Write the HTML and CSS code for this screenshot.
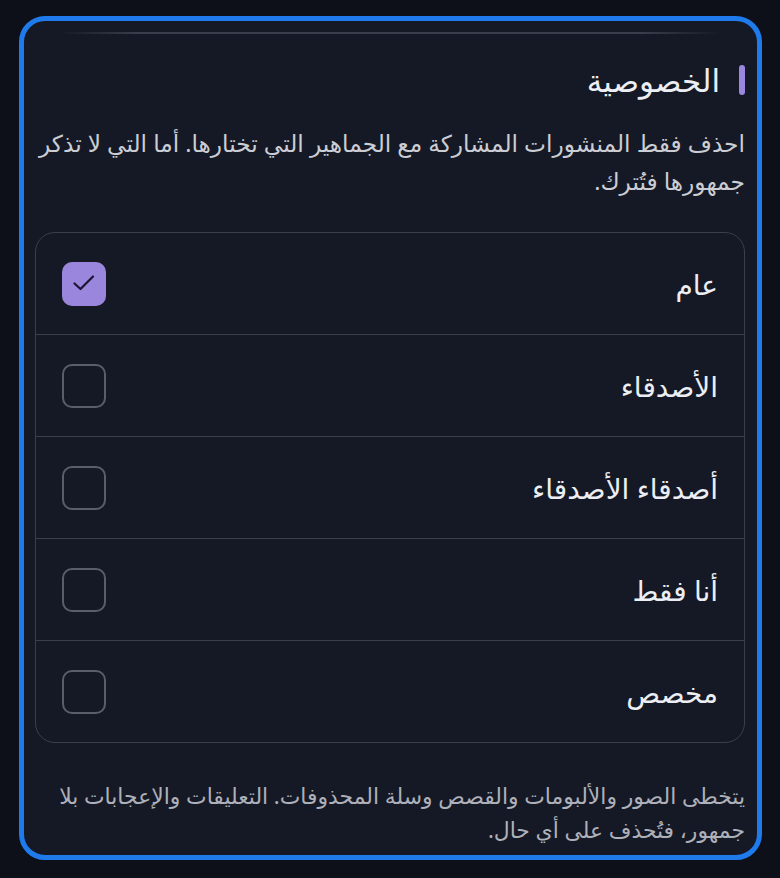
FILE: index.html
```html
<!DOCTYPE html>
<html lang="ar" dir="rtl">
<head>
<meta charset="utf-8">
<title>الخصوصية</title>
<link rel="stylesheet" href="styles.css">
</head>
<body>
<section class="card">
  <div class="top-line"></div>
  <h2 class="title"><span class="bar"></span><span>الخصوصية</span></h2>
  <p class="desc">احذف فقط المنشورات المشاركة مع الجماهير التي تختارها. أما التي لا تذكر جمهورها فتُترك.</p>
  <ul class="options">
    <li class="option"><span class="label">عام</span><span class="box checked"><svg viewBox="0 0 44 44" width="44" height="44"><path d="M12.5 21.5l6 5.5L31 14.5" fill="none" stroke="#1b1433" stroke-width="2.2" stroke-linecap="round" stroke-linejoin="round"/></svg></span></li>
    <li class="option"><span class="label">الأصدقاء</span><span class="box"></span></li>
    <li class="option"><span class="label">أصدقاء الأصدقاء</span><span class="box"></span></li>
    <li class="option"><span class="label">أنا فقط</span><span class="box"></span></li>
    <li class="option"><span class="label">مخصص</span><span class="box"></span></li>
  </ul>
  <p class="note">يتخطى الصور والألبومات والقصص وسلة المحذوفات. التعليقات والإعجابات بلا جمهور، فتُحذف على أي حال.</p>
</section>
</body>
</html>
```
FILE: styles.css
```css
html, body {
  margin: 0;
  padding: 0;
  background: #0d1018;
}
body {
  padding: 16px 18px 18px 19px;
  font-family: "Noto Sans", "DejaVu Sans", sans-serif;
  color: #e9eaef;
}
.card {
  box-sizing: border-box;
  width: 743px;
  height: 844px;
  border: 5px solid #1f7bec;
  border-radius: 26px;
  background: #151925;
  padding: 11px 12px 0 11px;
  overflow: hidden;
}
.top-line {
  height: 2px;
  margin: 0 24px;
  background: linear-gradient(90deg, rgba(60,64,78,0), #3a3e4c 12%, #3a3e4c 88%, rgba(60,64,78,0));
}
.title {
  display: flex;
  align-items: center;
  gap: 19px;
  margin: 29px 0 0 0;
  font-size: 31px;
  font-weight: 500;
  line-height: 34px;
  color: #eceef3;
}
.bar {
  width: 6px;
  height: 30px;
  border-radius: 3px;
  background: #9a86dc;
}
.desc {
  margin: 27px 0 0 0;
  font-size: 23.3px;
  line-height: 38px;
  color: #cbcdd5;
}
.options {
  list-style: none;
  margin: 32px 0 0 0;
  padding: 0;
  border: 1px solid #3b3e4b;
  border-radius: 20px;
}
.option {
  display: flex;
  align-items: center;
  justify-content: space-between;
  height: 101px;
  padding: 0 26px;
  border-bottom: 1px solid #3b3e4b;
}
.option:last-child {
  border-bottom: none;
}
.label {
  font-size: 28px;
  font-weight: 500;
  color: #eceef3;
}
.box {
  box-sizing: border-box;
  width: 44px;
  height: 44px;
  border: 2px solid #5b5e69;
  border-radius: 10px;
  display: flex;
  align-items: center;
  justify-content: center;
}
.box.checked {
  border: none;
  background: #9a86dc;
}
.note {
  margin: 36px 0 0 0;
  font-size: 21.9px;
  line-height: 34px;
  color: #aeb0ba;
}
```
